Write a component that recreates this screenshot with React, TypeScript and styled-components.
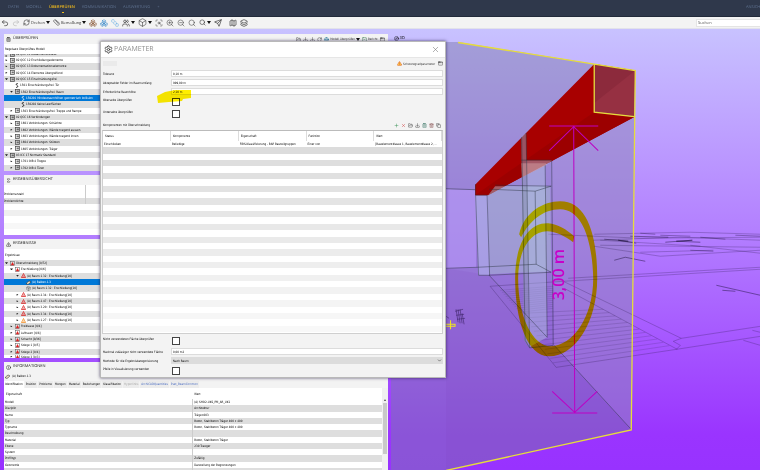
import React from "react";
import styled, { createGlobalStyle, css } from "styled-components";
import {
  Undo2, Redo2, RefreshCw, Ruler, Boxes, Box, ZoomIn, ZoomOut, Search, ScanSearch, Send, Map as MapIcon,
  Layers, X, Settings, Sigma, TriangleAlert, Info, FolderOpen, Download, Globe, SquareCheck, AppWindow,
  Copy, Trash2, ClipboardList, Users, Plus, RotateCw, ChevronDown, Package, Compass, SquareStack,
} from "lucide-react";

const GlobalStyle = createGlobalStyle`
  * { box-sizing: border-box; }
  html, body { margin: 0; padding: 0; }
  body {
    font-family: "DejaVu Sans Condensed", "Noto Sans", "Open Sans", sans-serif;
    font-size: 3px;
    font-weight: 400;
    line-height: 6px;
    color: #000;
    text-rendering: geometricPrecision;
    overflow: hidden;
  }
  button, input, select { font: inherit; color: inherit; margin: 0; padding: 0; border: 0; background: none; border-radius: 0; }
  svg { flex: none; display: block; }
`;

const Page = styled.div`
  display: flex;
  flex-direction: column;
  height: 100vh;
  background: #fff;
`;

const NavBar = styled.nav`
  display: flex;
  align-items: center;
  flex: none;
  gap: 7px;
  height: 17px;
  padding-left: 8px;
  overflow: hidden;
  background: #2f384b;
  border-bottom: 1px solid #222a3a;
  color: #5f7290;
  font-family: "Open Sans", sans-serif;
  font-size: 4px;
`;

const NavLink = styled.a<{ $active?: boolean; $end?: boolean }>`
  position: relative;
  flex: none;
  color: ${(p) => (p.$active ? "#f2bb1c" : "inherit")};
  font-weight: ${(p) => (p.$active ? 600 : 400)};
  text-decoration: none;
  ${(p) => p.$end && css`margin-left: auto; width: 14px; white-space: nowrap;`}
  ${(p) =>
    p.$active &&
    css`
      &::after {
        content: "";
        position: absolute;
        left: 50%;
        top: 7px;
        width: 2px;
        height: 1px;
        background: #f2bb1c;
      }
    `}
`;

const Toolbar = styled.div`
  display: flex;
  align-items: center;
  flex: none;
  gap: 3px;
  height: 12px;
  padding-left: 1px;
  background: #f3f3f3;
  border-bottom: 1px solid #e2e2ea;
  font-family: "Open Sans", sans-serif;
  font-size: 4px;
`;

const ToolGap = styled.span`
  flex: none;
  width: 1px;
`;

const ToolButton = styled.button<{ $color?: string }>`
  display: flex;
  align-items: center;
  gap: 1px;
  flex: none;
  color: ${(p) => p.$color ?? "#333"};
`;

const Caret = styled.span`
  flex: none;
  width: 0;
  height: 0;
  border: 2px solid transparent;
  border-bottom-width: 0;
  border-top: 3px solid #111;
`;

const SearchField = styled.input`
  flex: none;
  width: 64px;
  height: 8px;
  margin-left: auto;
  padding-left: 1px;
  background: #fff;
  border: 1px solid #e4e4e4;
  border-right: 0;
  &::placeholder { color: #555; opacity: 1; }
`;

const Workspace = styled.main`
  position: relative;
  display: flex;
  flex: 1;
  min-height: 0;
  background: linear-gradient(#c8c2ff 0%, #b27cff 48%, #9a34ff 92%, #9832ff 100%);
`;

const Sidebar = styled.div`
  display: grid;
  flex: none;
  width: 51%;
  grid-template-rows: 137fr 60fr 119fr 108fr;
  gap: 4px;
  padding: 5px 0 0 4px;
`;

const Panel = styled.section`
  display: flex;
  flex-direction: column;
  min-height: 0;
  overflow: hidden;
  background: #fff;
`;

const PanelHeader = styled.header`
  display: flex;
  align-items: center;
  flex: none;
  gap: 2px;
  height: 10px;
  padding: 0 3px 0 2px;
  background: #f3f3f3;
`;

const PanelTitle = styled.h2`
  margin: 0 auto 0 0;
  font-size: 4px;
  font-weight: 400;
  font-family: "Open Sans", sans-serif;
  color: #222;
`;

const PanelNote = styled.div<{ $height: number; $gray?: boolean }>`
  display: flex;
  align-items: center;
  flex: none;
  gap: 2px;
  height: ${(p) => p.$height}px;
  padding-left: 1px;
  background: ${(p) => (p.$gray ? "#f3f3f3" : "#fff")};
`;

const Tree = styled.ul<{ $rows: string }>`
  display: grid;
  flex: 1;
  grid-template-rows: ${(p) => p.$rows};
  min-height: 0;
  margin: 0;
  padding: 0;
  overflow: hidden;
  list-style: none;
`;

const INDENT = [1, 6, 12, 17];

const TreeItem = styled.li<{ $level: number; $selected?: boolean; $clipTop?: boolean }>`
  display: flex;
  align-items: ${(p) => (p.$clipTop ? "flex-end" : "center")};
  gap: 1px;
  min-height: 0;
  overflow: hidden;
  padding-left: ${(p) => INDENT[p.$level]}px;
  white-space: nowrap;
  &:nth-child(odd) { background: #dedede; }
  ${(p) => p.$selected && css`&&& { background: #0078d7; color: #fff; }`}
`;

const Twisty = styled.span<{ $kind?: "open" | "closed" }>`
  flex: none;
  width: 3px;
  height: 2px;
  margin-right: 1px;
  background: ${(p) => (p.$kind ? "#222" : "transparent")};
  clip-path: ${(p) => (p.$kind === "open" ? "polygon(0 0, 100% 0, 50% 100%)" : "polygon(20% 0, 80% 50%, 20% 100%)")};
`;

const SummaryTable = styled.table`
  display: grid;
  flex: 1;
  tbody { display: grid; grid-auto-rows: 1fr; }
  tr { display: grid; grid-template-columns: 82px 1fr; }
  tr:nth-child(3) { background: #dedede; }
  tr:nth-child(5) { background: #efefef; }
  tr:nth-child(7) { background: #f7f7f7; }
  th, td { padding: 0; font-weight: 400; text-align: left; }
  tr:nth-child(-n + 3) th { border-right: 1px solid #ccc; }
`;

const TabStrip = styled.div`
  display: flex;
  align-items: center;
  flex: none;
  gap: 1px;
  height: 8px;
  background: #f3f3f3;
`;

const Tab = styled.button<{ $tone?: "active" | "muted" | "link" }>`
  height: 7px;
  padding: 0 1px;
  background: ${(p) => (p.$tone === "active" ? "#fff" : "#ececec")};
  color: ${(p) => (p.$tone === "muted" ? "#a8a8a8" : p.$tone === "link" ? "#4a6cc0" : "#000")};
`;

const InfoBody = styled.div`
  display: flex;
  flex: 1;
  min-height: 0;
`;

const InfoTable = styled.table`
  display: grid;
  flex: 1;
  grid-template-rows: 11px 1fr;
  tr { display: grid; grid-template-columns: 188fr 189fr; }
  thead tr { height: 11px; align-items: center; }
  tbody { display: grid; grid-template-rows: repeat(11, 1fr) 2px; min-height: 0; }
  tbody tr { min-height: 0; overflow: hidden; }
  tbody tr:nth-child(even) { background: #dedede; }
  th, td { padding: 0 0 0 1px; font-weight: 400; text-align: left; white-space: nowrap; }
  td { border-left: 1px solid #ccc; }
  thead th { padding-left: 2px; }
`;

const ScrollTrack = styled.div`
  display: flex;
  flex-direction: column;
  align-items: center;
  flex: none;
  width: 6px;
  gap: 2px;
  padding-top: 11px;
  background: #f0f0f0;
`;

const ScrollUp = styled.span`
  border: 1px solid transparent;
  border-top-width: 0;
  border-bottom: 2px solid #444;
`;

const ScrollThumb = styled.span`
  width: 4px;
  height: 51px;
  background: #c9c9c9;
`;

const Viewport = styled.section`
  display: flex;
  flex-direction: column;
  flex: 1;
  min-width: 0;
  position: relative;
`;

const ViewTab = styled.button`
  position: absolute;
  left: 6px;
  top: 6px;
  display: flex;
  align-items: center;
  gap: 1px;
  font-size: 4px;
`;

const Scene = styled.svg`
  width: 100%;
  height: 100%;
`;

const Marker = styled.path`
  fill: #fff000;
  mix-blend-mode: multiply;
`;

const Dialog = styled.div`
  position: absolute;
  left: 100px;
  top: 12px;
  right: 314px;
  display: flex;
  flex-direction: column;
  background: #f3f3f3;
  border: 1px solid #b9b9b9;
  box-shadow: 0 0 3px rgba(30, 20, 60, 0.7);
`;

const DialogHeader = styled.header`
  display: flex;
  align-items: center;
  gap: 1px;
  height: 16px;
  padding: 0 5px 0 3px;
  background: #fff;
  border-bottom: 1px solid #e6e6e6;
  color: #444;
`;

const DialogTitle = styled.h1`
  margin: 0 auto 0 0;
  color: #8f8f8f;
  font: 400 7px/10px "Open Sans", sans-serif;
`;

const DialogTools = styled.div`
  display: flex;
  align-items: center;
  gap: 3px;
  height: 11px;
  padding: 0 2px;
`;

const DisabledChip = styled.span`
  width: 14px;
  height: 5px;
  margin-right: auto;
  background: #eaeaea;
`;

const Form = styled.div`
  display: flex;
  flex-direction: column;
  padding: 0 2px 0 1px;
`;

const Field = styled.label<{ $tall?: boolean }>`
  display: grid;
  grid-template-columns: 68px 1fr;
  align-items: ${(p) => (p.$tall ? "start" : "center")};
  height: ${(p) => (p.$tall ? 12 : 9)}px;
  padding-left: 1px;
  padding-top: ${(p) => (p.$tall ? 1 : 0)}px;
  white-space: nowrap;
`;

const TextBox = styled.input`
  width: 100%;
  height: 7px;
  padding-left: 1px;
  background: #fff;
  border: 1px solid #dcdcdc;
`;

const CheckBox = styled.input`
  appearance: none;
  width: 8px;
  height: 8px;
  margin: 1px 0 0 1px;
  background: #fff;
  border: 1px solid #444;
`;

const SelectWrap = styled.span`
  position: relative;
  display: flex;
  svg { position: absolute; right: 1px; top: 1px; }
`;

const SelectBox = styled.select`
  appearance: none;
  width: 100%;
  height: 7px;
  padding-left: 2px;
  background: #dcdcdc;
`;

const ComponentsBar = styled.div`
  display: flex;
  align-items: center;
  gap: 2px;
  height: 10px;
  padding: 0 4px 0 2px;
  > span { margin-right: auto; }
`;

const ComponentsTable = styled.table`
  display: grid;
  grid-template-rows: 10px 192px;
  margin: 0 2px 1px 1px;
  background: #fff;
  border: 1px solid #cfcfcf;
  border-top-color: #bbb;
  tr { display: grid; grid-template-columns: 68px repeat(4, 1fr); min-height: 0; overflow: hidden; }
  thead tr { height: 10px; align-items: stretch; }
  tbody { display: grid; grid-template-rows: repeat(30, 1fr) 1px; }
  th, td { padding: 0 0 0 1px; font-weight: 400; text-align: left; white-space: nowrap; }
  th { padding: 2px 0 0 2px; border-right: 1px solid #dcdcdc; }
`;

const StripeRow = styled.tr<{ $shade: number }>`
  background: rgb(${(p) => p.$shade}, ${(p) => p.$shade}, ${(p) => p.$shade});
`;

const Highlight = styled.svg`
  position: absolute;
  left: 56px;
  top: 46px;
  mix-blend-mode: multiply;
  pointer-events: none;
`;

type Node = { label: string; level: number; twisty?: "open" | "closed"; icon: "set" | "rule" | "result" | "red" | "orange" | "beam" | "room"; selected?: boolean };

const RULES: Node[] = [
  { label: "02 QCC 11 Bedarfskonkretes2", level: 0, twisty: "closed", icon: "set" },
  { label: "02 QCC 12 Erschließungselemente", level: 0, twisty: "closed", icon: "set" },
  { label: "02 QCC 13 Dokumentationselemente", level: 0, twisty: "closed", icon: "set" },
  { label: "02 QCC 14 Elemente übergreifend", level: 0, twisty: "closed", icon: "set" },
  { label: "02 QCC 15 Einschränkungsfrei", level: 0, twisty: "open", icon: "set" },
  { label: "1501 Einschränkungsfrei: Tür", level: 1, icon: "rule" },
  { label: "1502 Einschränkungsfrei: Raum", level: 1, twisty: "open", icon: "set" },
  { label: "150201 Mindestraumhöhen geometrisch kollision", level: 2, icon: "rule", selected: true },
  { label: "150202 Keine Leerflächen", level: 2, icon: "rule" },
  { label: "1503 Einschränkungsfrei: Treppe und Rampe", level: 1, twisty: "closed", icon: "set" },
  { label: "02 QCC 16 Verbindungen", level: 0, twisty: "open", icon: "set" },
  { label: "1601 Verbindungen: Schächte", level: 1, twisty: "closed", icon: "set" },
  { label: "1602 Verbindungen: Wände tragend aussen", level: 1, twisty: "closed", icon: "set" },
  { label: "1603 Verbindungen: Wände tragend innen", level: 1, twisty: "closed", icon: "set" },
  { label: "1604 Verbindungen: Stützen", level: 1, twisty: "closed", icon: "set" },
  { label: "1605 Verbindungen: Träger", level: 1, twisty: "closed", icon: "set" },
  { label: "03 ICC 17 Normativ Standard", level: 0, twisty: "open", icon: "set" },
  { label: "1701 OIB 4 Treppe", level: 1, twisty: "closed", icon: "set" },
  { label: "1702 OIB 4 Türen", level: 1, twisty: "closed", icon: "set" },
];

const RESULTS: Node[] = [
  { label: "Überschneidung [0/72]", level: 0, twisty: "open", icon: "result" },
  { label: "Erschließung [0/6]", level: 1, twisty: "open", icon: "result" },
  { label: "(A) Raum.1.32 : Erschließung[10]", level: 2, twisty: "open", icon: "red" },
  { label: "(A) Balken.1.3", level: 3, icon: "beam", selected: true },
  { label: "(A) Raum.1.32 : Erschließung[10]", level: 3, icon: "room" },
  { label: "(A) Raum.2.34 : Erschließung[10]", level: 2, twisty: "closed", icon: "red" },
  { label: "(A) Raum.2.47 : Erschließung[10]", level: 2, twisty: "closed", icon: "red" },
  { label: "(A) Raum.3.20 : Erschließung[10]", level: 2, twisty: "closed", icon: "red" },
  { label: "(A) Raum.3.34 : Erschließung[10]", level: 2, twisty: "closed", icon: "red" },
  { label: "(A) Raum.1.27 : Erschließung[10]", level: 2, twisty: "closed", icon: "orange" },
  { label: "Freiklasse [0/4]", level: 1, twisty: "closed", icon: "result" },
  { label: "Luftraum [0/8]", level: 1, twisty: "closed", icon: "result" },
  { label: "Schacht [0/36]", level: 1, twisty: "closed", icon: "result" },
  { label: "Stiege 1 [0/5]", level: 1, twisty: "closed", icon: "result" },
  { label: "Stiege 2 [0/4]", level: 1, twisty: "closed", icon: "result" },
  { label: "Stiege 3 [0/3]", level: 1, twisty: "closed", icon: "result" },
];

const PROPERTIES: [string, string][] = [
  ["Modell", "(A) SHO2-UKS_PM_AR_UK1"],
  ["Disziplin", "Architektur"],
  ["Name", "Träger-003"],
  ["Typ", "Beton, Stahlbeton Träger 400 x 400"],
  ["Typname", "Beton, Stahlbeton Träger 400 x 400"],
  ["Beschreibung", ""],
  ["Material", "Beton, Stahlbeton Träger"],
  ["Ebene", "230 Traeger"],
  ["System", ""],
  ["Profiltyp", "Zufällig"],
  ["Geometrie", "Darstellung der Begrenzungen"],
  ["", ""],
];

function NodeIcon({ kind }: { kind: Node["icon"] }) {
  switch (kind) {
    case "set":
      return (
        <svg width="5" height="5" viewBox="0 0 10 10" fill="none" stroke="#444" strokeWidth="1.4">
          <rect x="1" y="1" width="8" height="8" /><path d="M4 3v4M4 4.5h3M6.5 3v4" />
        </svg>
      );
    case "rule":
      return (
        <svg width="4" height="5" viewBox="0 0 8 10" fill="none" stroke="currentColor" strokeWidth="1.6">
          <path d="M6 2C5 .5 2 1 2.500 3S6 5 5.500 7 3 9.500 2 8" />
        </svg>
      );
    case "result":
      return (
        <svg width="5" height="5" viewBox="0 0 10 10" fill="none">
          <rect x=".7" y=".7" width="8.600" height="8.600" stroke="#555" /><path d="M5 2 8.500 8.500H1.500Z" fill="#d22" />
        </svg>
      );
    case "beam":
      return <svg width="5" height="5" viewBox="0 0 10 10"><path d="M1 6 6 2l3 1v2L4 9 1 8Z" fill="#e8d9c0" stroke="#222" /></svg>;
    case "room":
      return <Package size={5} color="#555" />;
    default:
      return (
        <svg width="5" height="5" viewBox="0 0 10 10" fill="none" stroke={kind === "red" ? "#d81e1e" : "#f08a1c"} strokeWidth="1.5">
          <path d="M5 1 7 5 9.300 9H.700L3 5ZM3 6h4" />
        </svg>
      );
  }
}

function NodeList({ nodes, rows, clipTop }: { nodes: Node[]; rows: string; clipTop?: boolean }) {
  return (
    <Tree $rows={rows}>
      {nodes.map((n, i) => (
        <TreeItem key={i} $level={n.level} $selected={n.selected} $clipTop={clipTop && i === 0}>
          <Twisty $kind={n.twisty} />
          <NodeIcon kind={n.icon} />
          {n.label}
        </TreeItem>
      ))}
    </Tree>
  );
}

const treads = Array.from({ length: 12 }, (_, i) => i);

function Model() {
  return (
    <Scene viewBox="388 29 372 441" preserveAspectRatio="xMinYMin slice" role="img" aria-label="3D-Modell">
      <path d="M391 42H458L594 64 635 70.500 631 429.500 446 470H391Z" fill="rgb(123,122,172)" fillOpacity=".47" />
      <path d="M446 189 476 190V267L446 268Z" fill="#bb9cff" fillOpacity=".55" />
      <path d="M552 161 634 117 631 429 554 345Z" fill="#c8a8f0" fillOpacity=".15" />
      <path d="M446 268 489 275 553 345 631 429.500 446 470Z" fill="#7d45c0" fillOpacity=".12" />

      <g fill="none" stroke="#2c1c50" strokeWidth=".6" strokeOpacity=".45">
        <path d="M594 234 690 232 760 234M548 234 640 238 760 237M593 240 680 237 760 240M600 245 760 247M594 246 660 256 760 250M600 240 700 246M640 252 713 250M690 245 760 253" />
        <path d="M563 281 760 269M568 278 760 267M563 281 681 338 673 341 680 345 676 349M564 288 677 349M681 338 760 326M676 349 760 336M743 340 760 345M752 330 760 332" />
        <path d="M490 286 556 367 676 349M490 286 563 281" />
        {treads.map((i) => (
          <path key={i} d={`M${523 + i * 2.7} ${313 + i * 4.5}L${603 + i * 6} ${309 + i * 3.300}`} strokeWidth=".4" />
        ))}
        {treads.map((i) => (
          <path key={`s${i}`} d={`M${500 + i * 1.800} ${290 + i * 2}L553 ${286 + i * 2}`} strokeWidth=".3" />
        ))}
      </g>
      <g fill="none" stroke="#20123c" strokeOpacity=".6">
        <path d="M604 239 628 241 618 240 636 243M665 242 692 240 676 241 700 242M630 236 668 237M614 260 625 257 645 261M716 285 760 295M722 290 735 291" strokeWidth=".8" />
        <path d="M660 235 690 236M700 237 725 239M640 233 655 234M735 235 760 236M690 250 713 251" strokeWidth=".6" />
      </g>

      <path d="M594 64 475 184.500V195H488L551 161 634 117 594 112Z" fill="#a80000" />
      <path d="M594 112 475 195H488L634 117Z" fill="#9c0000" />
      <path d="M594 64 635 70.500 634 116.500 594 112Z" fill="#963042" />
      <path d="M594 64 635 70.500 594 103Z" fill="#8c2a3c" />

      <path d="M475 195H488L489 275 478 275Z" fill="#b8c4f0" fillOpacity=".5" />
      <path d="M488 195 495 186 550 186 551 271 489 274Z" fill="#a6bcd0" fillOpacity=".5" />
      <path d="M521 137 526 133 529 347 524 340Z" fill="#8d98b4" fillOpacity=".55" />
      <path d="M526 160 552 160 545 166 547 337 529 347Z" fill="#b0c0e0" fillOpacity=".45" />
      <path d="M521 163H546V165L522 177Z" fill="#d09aa0" fillOpacity=".55" />
      <g fill="none" stroke="#26303c" strokeWidth=".8" strokeOpacity=".55">
        <path d="M446 188.500 475 189.500M446 268 478 267 536 264 551 272M495 185 551 186 535 191 489 189M535 191 536 264M489 275 551 272" />
        <path d="M475.500 184V195L478.500 275H489.500L487 195H475.500M489 275 547 337M554 345 631 429" />
        <path d="M521.500 137 525 340 529.500 347.500 553 345M526 133 529.500 347M545 165 547 337M551.500 160 553 345M521 160 551 160" />
      </g>
      <path d="M458 42.500 594 64 635 70.500 631 429.500 446 470M594 64V112L634 116.500" fill="none" stroke="#e6dc3c" strokeWidth="1.300" />

      <g stroke="#bd00c4" fill="none" strokeWidth="1">
        <path d="M549 126H598M549 150.500 573.500 126.500 598 150.500" />
        <path d="M573.500 126 574.500 412M552 391 574.500 412 597 391M552 412.500H597" />
      </g>
      <text transform="translate(564 300) rotate(-90)" fill="#c800c8" fontFamily="Open Sans, sans-serif" fontSize="16" fontWeight="600">3,00 m</text>
      <Marker d="M519 234C524 212 543 201 560 201 587 201 597 235 597 278 597 322 575 356 549 356 527 356 515 320 515 278 515 244 528 222 548 223 558 224 566 229 574 236L573 242C565 236 556 231 547 231 530 231 518 250 518 278 518 316 532 346 551 346 572 345 593 318 593 278 592 240 582 209 560 209 543 209 530 220 521 237Z" />
      <path d="M456 309 458 322M458 309 460 323M460 309 462 323M462 313 464 324M455 311 463 309M456 315 464 314M457 319 465 318M446 316 449 318" stroke="#3b2266" strokeOpacity=".7" strokeWidth=".8" fill="none" />
      <path d="M450.500 320V329M446 324H455V326H446" stroke="#f0e81e" fill="none" strokeWidth="1" />
    </Scene>
  );
}

function ParameterDialog() {
  return (
    <Dialog role="dialog" aria-label="Parameter">
      <DialogHeader>
        <Settings size={9} strokeWidth={2.5} />
        <DialogTitle>PARAMETER</DialogTitle>
        <ToolButton aria-label="Schließen"><X size={9} strokeWidth={1.5} color="#777" /></ToolButton>
      </DialogHeader>
      <DialogTools>
        <DisabledChip />
        <ToolButton><TriangleAlert size={5} color="#d33a1c" fill="#ffd34a" />Schweregradparameter</ToolButton>
        <ToolButton aria-label="Fenster"><AppWindow size={5} /></ToolButton>
      </DialogTools>
      <Form>
        <Field>Toleranz<TextBox defaultValue="0,10 m" /></Field>
        <Field>Akzeptabler Fehler im Raumumfang<TextBox defaultValue="999,00 m" /></Field>
        <Field>Erforderliche Raumhöhe<TextBox defaultValue="2,10 m" /></Field>
      </Form>
      <Form>
        <Field $tall>Oberseite überprüfen<CheckBox type="checkbox" /></Field>
        <Field $tall>Unterseite überprüfen<CheckBox type="checkbox" /></Field>
      </Form>
      <ComponentsBar>
        <span>Komponenten mit Überschneidung</span>
        <ToolButton aria-label="Zeile hinzufügen"><Plus size={5} color="#2a8a4a" /></ToolButton>
        <ToolButton aria-label="Zeile entfernen"><X size={5} color="#c33" /></ToolButton>
        <ToolButton aria-label="Öffnen"><FolderOpen size={5} /></ToolButton>
        <ToolButton aria-label="Speichern"><Download size={5} /></ToolButton>
        <ToolButton aria-label="Kopieren" $color="#2a6a5a"><ClipboardList size={5} /></ToolButton>
        <ToolButton aria-label="Löschen" $color="#7a3a3a"><Trash2 size={5} /></ToolButton>
        <ToolButton aria-label="Einfügen"><Copy size={5} /></ToolButton>
      </ComponentsBar>
      <ComponentsTable>
        <thead>
          <tr>{["Status", "Komponente", "Eigenschaft", "Funktion", "Wert"].map((h) => <th key={h}>{h}</th>)}</tr>
        </thead>
        <tbody>
          <tr>
            <td>Einschließen</td><td>Beliebige</td><td>FIBS-Klassifizierung - BAP Bauteilgruppen</td>
            <td>Einer von</td><td>[Bauelementklasse 1, Bauelementklasse 2, ...</td>
          </tr>
          {Array.from({ length: 30 }, (_, i) => (
            <StripeRow key={i} $shade={i % 2 ? 255 : Math.min(253, 220 + i)}><td /></StripeRow>
          ))}
        </tbody>
      </ComponentsTable>
      <Form>
        <Field $tall>Nicht verwendeten Fläche überprüfen<CheckBox type="checkbox" /></Field>
        <Field>Maximal zulässiger nicht verwendete Fläche<TextBox defaultValue="0,00 m2" /></Field>
        <Field>
          Methode für die Ergebniskategorisierung
          <SelectWrap>
            <SelectBox defaultValue="Nach Raum"><option>Nach Raum</option></SelectBox>
            <ChevronDown size={5} />
          </SelectWrap>
        </Field>
        <Field $tall>Pfeile in Visualisierung verwenden<CheckBox type="checkbox" /></Field>
      </Form>
      <Highlight width="36" height="16" viewBox="0 0 36 16">
        <path d="M0 8 8 4 18 2 34 2V10L26 11 25 13 12 14 1 15Z" fill="#ffee00" />
      </Highlight>
    </Dialog>
  );
}

export default function App() {
  return (
    <Page>
      <GlobalStyle />
      <NavBar>
        <NavLink href="#datei">DATEI</NavLink>
        <NavLink href="#modell">MODELL</NavLink>
        <NavLink href="#pruefen" $active>ÜBERPRÜFEN</NavLink>
        <NavLink href="#kommunikation">KOMMUNIKATION</NavLink>
        <NavLink href="#auswertung">AUSWERTUNG</NavLink>
        <NavLink href="#neu">+</NavLink>
        <NavLink href="#ansichten" $end>ANSICH</NavLink>
      </NavBar>
      <Toolbar>
        <ToolButton aria-label="Rückgängig"><Undo2 size={8} /></ToolButton>
        <ToolButton aria-label="Wiederholen" $color="#bbb"><Redo2 size={8} /></ToolButton>
        <ToolButton><RefreshCw size={7} />Drehen<Caret /></ToolButton>
        <ToolButton><Ruler size={7} />Bemaßung<Caret /></ToolButton>
        <ToolButton aria-label="Auswahl" $color="#8a5a3a"><Boxes size={8} strokeWidth={1.5} /></ToolButton>
        <ToolButton aria-label="Hinzufügen" $color="#3a8ac8"><Boxes size={8} strokeWidth={1.5} /></ToolButton>
        <ToolButton aria-label="Transparent" $color="#5aa8e0"><SquareStack size={8} strokeWidth={1.5} /></ToolButton>
        <ToolButton aria-label="Gruppe"><Users size={8} /><Caret /></ToolButton>
        <ToolButton aria-label="Würfel"><Box size={9} strokeWidth={1.5} /><Caret /></ToolButton>
        <ToolButton aria-label="Zoom Fenster"><ScanSearch size={8} strokeWidth={1.5} /></ToolButton>
        <ToolButton aria-label="Vergrößern"><ZoomIn size={8} strokeWidth={1.5} /></ToolButton>
        <ToolButton aria-label="Verkleinern"><ZoomOut size={8} strokeWidth={1.5} /></ToolButton>
        <ToolButton aria-label="Zoom alles"><Search size={8} strokeWidth={1.5} /></ToolButton>
        <ToolButton aria-label="Zoom Auswahl"><Search size={7} /><Caret /></ToolButton>
        <ToolButton aria-label="Flug"><Send size={8} /></ToolButton>
        <ToolGap />
        <ToolButton aria-label="Karte"><MapIcon size={8} /></ToolButton>
        <ToolButton aria-label="Ebenen"><Layers size={8} /></ToolButton>
        <SearchField aria-label="Suchen" placeholder="Suchen" />
      </Toolbar>
      <Workspace>
        <Sidebar>
          <Panel>
            <PanelHeader>
              <ClipboardList size={5} /><PanelTitle>ÜBERPRÜFEN</PanelTitle>
              <ToolButton aria-label="Öffnen"><FolderOpen size={5} /></ToolButton>
              <ToolButton aria-label="Laden"><Download size={5} /></ToolButton>
              <ToolButton aria-label="Sichern"><Download size={5} /></ToolButton>
              <ToolButton aria-label="Einstellungen"><RotateCw size={5} /></ToolButton>
              <ToolButton><Globe size={5} color="#1f7a9c" />Modell überprüfen<Caret /></ToolButton>
              <ToolButton><SquareCheck size={5} color="#246b3c" />Bericht</ToolButton>
              <ToolButton aria-label="Fenster"><AppWindow size={5} /></ToolButton>
            </PanelHeader>
            <PanelNote $height={10}>Regelsatz Überprüftes Modell</PanelNote>
            <NodeList nodes={RULES} rows="3px repeat(18, 1fr)" clipTop />
          </Panel>
          <Panel>
            <PanelHeader><Sigma size={5} /><PanelTitle>ERGEBNISÜBERSICHT</PanelTitle></PanelHeader>
            <SummaryTable>
              <tbody>
                {["", "Problemanzahl", "Problemdichte", "", "", "", "", ""].map((t, i) => (
                  <tr key={i}><th scope="row">{t}</th><td /></tr>
                ))}
              </tbody>
            </SummaryTable>
          </Panel>
          <Panel>
            <PanelHeader><TriangleAlert size={5} /><PanelTitle>ERGEBNISSE</PanelTitle></PanelHeader>
            <PanelNote $height={11}>Ergebnisse</PanelNote>
            <NodeList nodes={RESULTS} rows="repeat(15, 1fr) 3px" />
          </Panel>
          <Panel>
            <PanelHeader><Info size={5} /><PanelTitle>INFORMATIONEN</PanelTitle></PanelHeader>
            <PanelNote $height={8} $gray><NodeIcon kind="beam" />(A) Balken.1.3</PanelNote>
            <TabStrip>
              <Tab $tone="active">Identifikation</Tab>
              {["Position", "Probleme", "Mengen", "Material", "Beziehungen", "Klassifikation"].map((t) => <Tab key={t}>{t}</Tab>)}
              <Tab $tone="muted">Hyperlinks</Tab>
              <Tab $tone="link">ArchiCADQuantities</Tab>
              <Tab $tone="link">Pset_BeamCommon</Tab>
            </TabStrip>
            <InfoBody>
              <InfoTable>
                <thead><tr><th>Eigenschaft</th><th>Wert</th></tr></thead>
                <tbody>
                  {PROPERTIES.map(([k, v], i) => <tr key={i}><th scope="row">{k}</th><td>{v}</td></tr>)}
                </tbody>
              </InfoTable>
              <ScrollTrack><ScrollUp /><ScrollThumb /></ScrollTrack>
            </InfoBody>
          </Panel>
        </Sidebar>
        <Viewport>
          <Model />
          <ViewTab><Compass size={5} />3D</ViewTab>
        </Viewport>
        <ParameterDialog />
      </Workspace>
    </Page>
  );
}
